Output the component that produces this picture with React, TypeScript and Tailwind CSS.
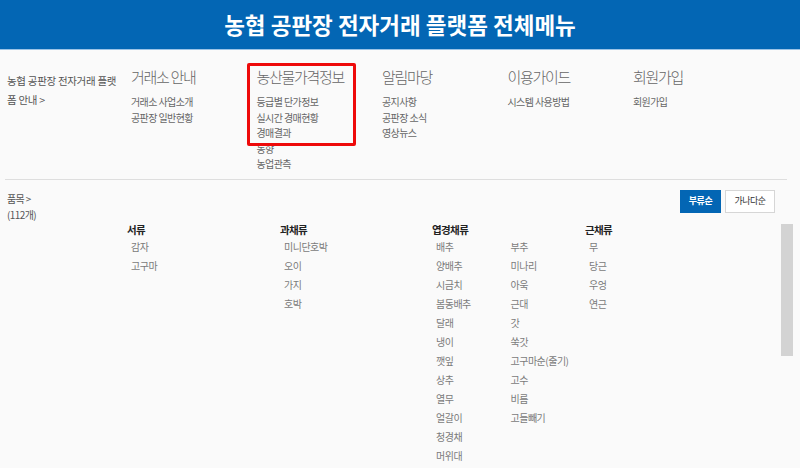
import React from "react";

const font = { fontFamily: '"Noto Sans CJK KR", "Noto Sans", sans-serif' };

const menus = [
  { title: "거래소 안내", items: ["거래소 사업소개", "공판장 일반현황"] },
  { title: "농산물가격정보", items: ["등급별 단가정보", "실시간 경매현황", "경매결과", "동향", "농업관측"] },
  { title: "알림마당", items: ["공지사항", "공판장 소식", "영상뉴스"] },
  { title: "이용가이드", items: ["시스템 사용방법"] },
  { title: "회원가입", items: ["회원가입"] },
];

const groups = [
  { title: "서류", cols: [["감자", "고구마"]] },
  { title: "과채류", cols: [["미니단호박", "오이", "가지", "호박"]] },
  {
    title: "엽경채류",
    cols: [
      ["배추", "양배추", "시금치", "봄동배추", "달래", "냉이", "깻잎", "상추", "열무", "얼갈이", "청경채", "머위대"],
      ["부추", "미나리", "아욱", "근대", "갓", "쑥갓", "고구마순(줄기)", "고수", "비름", "고들빼기"],
    ],
  },
  { title: "근채류", cols: [["무", "당근", "우엉", "연근"]] },
];

export default function App() {
  return (
    <div className="w-[800px] h-[468px] overflow-hidden bg-[#fafafa] relative" style={font}>
      {/* header */}
      <div className="h-[50px] bg-[#0366b4] border-b border-[#9cc3e6] flex items-center justify-center">
        <h1 className="text-white text-[22.5px] font-bold tracking-[0px] leading-none">
          농협 공판장 전자거래 플랫폼 전체메뉴
        </h1>
      </div>

      {/* site menu */}
      <div className="flex pt-[17px] pb-[7px] ml-[5px] mr-[13px] border-b border-[#dedede]">
        <div className="w-[126px] pl-[2px] pr-[8px] pt-[4px] text-[10.5px] leading-[19px] tracking-[-0.3px] text-[#555]">
          농협 공판장 전자거래 플랫폼 안내 &gt;
        </div>
        {menus.map((m) => (
          <div key={m.title} className="w-[125.5px] shrink-0">
            <div className="text-[15px] leading-[20px] tracking-[-1.3px] text-[#666] font-light">{m.title}</div>
            <ul className="mt-[7px]">
              {m.items.map((it) => (
                <li key={it} className="text-[10px] leading-[15.5px] tracking-[-0.6px] text-[#666]">
                  {it}
                </li>
              ))}
            </ul>
          </div>
        ))}
      </div>

      {/* items */}
      <div className="flex justify-between items-start pl-[7px] pr-[25px] pt-[10px]">
        <div className="text-[10px] leading-[16px] tracking-[-0.6px] text-[#555] pt-[1px]">
          <div>품목 &gt;</div>
          <div>(112개)</div>
        </div>
        <div className="flex gap-[4px]">
          <button className="w-[41px] h-[23px] bg-[#0366b4] text-white text-[9px] font-bold tracking-[-0.5px]">
            부류순
          </button>
          <button className="w-[50px] h-[23px] bg-white border border-[#d6d6d6] text-[#333] text-[9px] tracking-[-0.5px]">
            가나다순
          </button>
        </div>
      </div>

      <div className="flex">
        <div className="flex-1 grid grid-cols-[153px_152px_153px_150px] pl-[127px]">
          {groups.map((g) => (
            <div key={g.title}>
              <div className="text-[10.5px] leading-[14px] font-bold text-[#222] tracking-[-0.6px]">{g.title}</div>
              <div className="flex pl-[4px]">
                {g.cols.map((col, i) => (
                  <ul key={i} className="w-[75px]">
                    {col.map((it) => (
                      <li key={it} className="text-[10px] leading-[19px] tracking-[-0.5px] text-[#7a7a7a]">
                        {it}
                      </li>
                    ))}
                  </ul>
                ))}
              </div>
            </div>
          ))}
        </div>
        <div className="w-[12px] mr-[7px] mt-[1px] h-[132px] bg-[#d3d3d3]" />
      </div>

      {/* highlight annotation */}
      <div className="absolute left-[247px] top-[63px] w-[109px] h-[83px] border-[3px] border-[#ee0a0a] rounded-[2px]" />
    </div>
  );
}
